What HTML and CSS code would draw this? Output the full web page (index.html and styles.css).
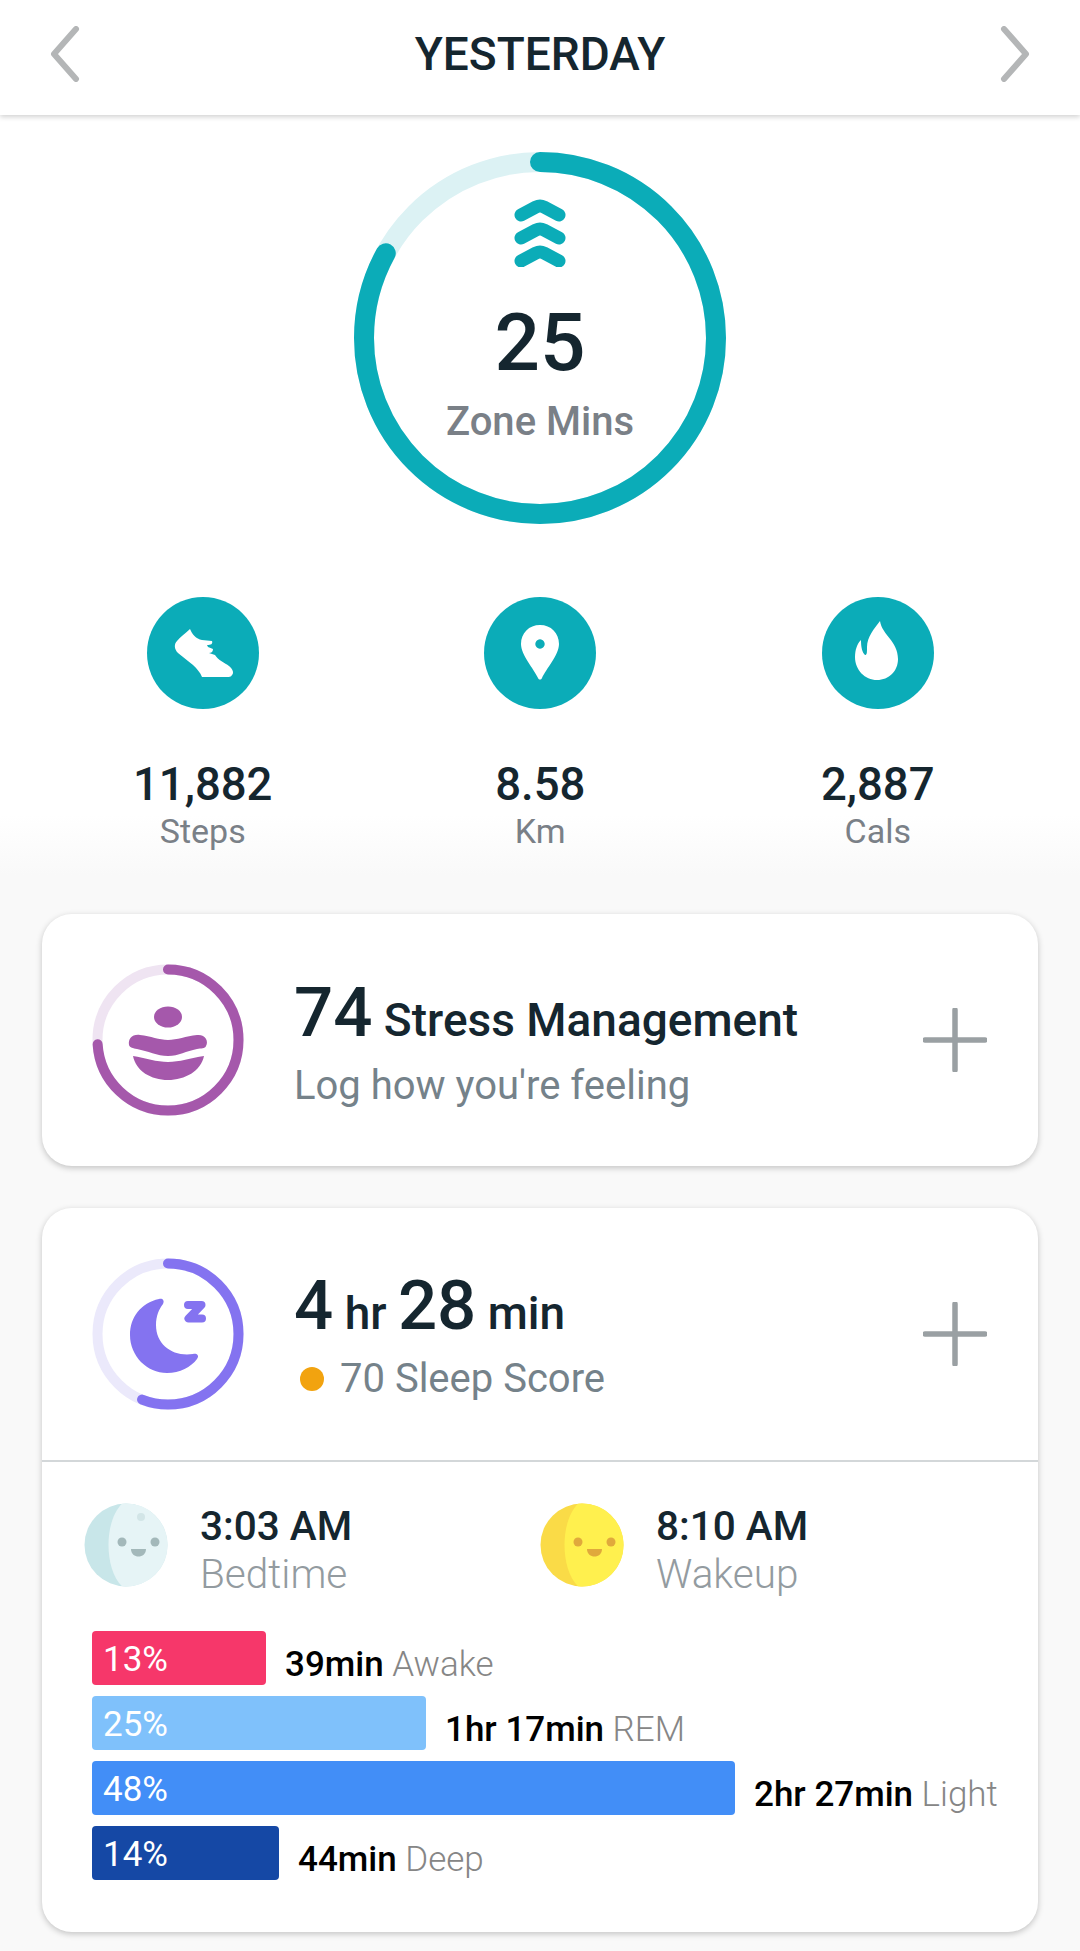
FILE: index.html
```html
<!DOCTYPE html>
<html lang="en">
<head>
    <meta charset="UTF-8">
    <title>Yesterday</title>
    <link rel="stylesheet" href="styles.css">
</head>
<body>
<header class="top_bar">
    <svg class="arrow" viewBox="0 0 30 56"><path d="M26 3 L4 28 L26 53"/></svg>
    <h1>YESTERDAY</h1>
    <svg class="arrow" viewBox="0 0 30 56"><path d="M4 3 L26 28 L4 53"/></svg>
</header>

<section class="zone">
    <svg class="zone_ring" viewBox="0 0 372 372">
        <circle class="zone_track" cx="186" cy="186" r="176"/>
        <circle class="zone_value" cx="186" cy="186" r="176" pathLength="100" stroke-dasharray="83 100" transform="rotate(-90 186 186)"/>
    </svg>
    <div class="zone_text">
        <svg class="chevrons" viewBox="0 0 52 69">
            <path d="M7 17 L22 9 Q26 7 30 9 L45 17"/>
            <path d="M7 40 L22 32 Q26 30 30 32 L45 40"/>
            <path d="M7 63 L22 55 Q26 53 30 55 L45 63"/>
        </svg>
        <div class="zone_num">25</div>
        <div class="zone_label">Zone Mins</div>
    </div>
</section>

<section class="stats">
    <div class="stat">
        <svg class="stat_icon" viewBox="0 0 112 112">
            <circle class="teal" cx="56" cy="56" r="56"/>
            <path class="white" d="M43 32 C45 37 49 42 55 43 L65 44 C66 47 64 48 60 48 L61 50 L66 52 C66 55 64 56 62 56 L68 58 C71 63 78 66 82 69 C86 72 87 76 85 78 C84 80 82 80 80 80 L55 80 C53 75 50 72 46 68 L31 56 C27 52 27 47 30 44 C33 40 39 36 43 32Z"/>
        </svg>
        <div class="stat_num">11,882</div>
        <div class="stat_label">Steps</div>
    </div>
    <div class="stat">
        <svg class="stat_icon" viewBox="0 0 112 112">
            <circle class="teal" cx="56" cy="56" r="56"/>
            <path class="white" fill-rule="evenodd" d="M56 28 C67 28 75 36 75 47 C75 58 62 72 58 81 C57 83 55 83 54 81 C50 72 37 58 37 47 C37 36 45 28 56 28Z M56 42.300 A4.700 4.700 0 1 0 56.010 42.300Z"/>
        </svg>
        <div class="stat_num">8.58</div>
        <div class="stat_label">Km</div>
    </div>
    <div class="stat">
        <svg class="stat_icon" viewBox="0 0 112 112">
            <circle class="teal" cx="56" cy="56" r="56"/>
            <path class="white" d="M58 24 C60 38 76 44 76 62 C76 74 67 83 55 83 C43 83 33 73 33 60 C33 53 35 47 39 43 C39 50 40 55 43 58 C45 58 45 56 45 50 C45 40 52 32 58 24Z"/>
        </svg>
        <div class="stat_num">2,887</div>
        <div class="stat_label">Cals</div>
    </div>
</section>

<section class="card">
    <div class="card_row">
        <svg class="card_ring" viewBox="-1 -1 152 152">
            <circle class="stress_track" cx="75" cy="75" r="70.500"/>
            <circle class="stress_value" cx="75" cy="75" r="70.500" pathLength="100" stroke-dasharray="74 100" transform="rotate(-90 75 75)"/>
            <ellipse class="stress_fill" cx="75" cy="52" rx="14" ry="10.500"/>
            <path class="stress_fill" d="M47 70 C58 71 66 75 75 75 C84 75 93 71 104 70 C112 69 116 76 113 81 C112 84 108 83 104 84 C93 86 86 91 75 91 C64 91 55 86 44 84 C40 83 37 83 36 80 C35 74 39 69 47 70Z"/>
            <path class="stress_fill" d="M40 91 C52 93 64 97 75 97 C86 97 98 93 111 91 C108 106 92 115 75 115 C58 115 43 106 40 91Z"/>
        </svg>
        <div class="card_text">
            <div class="headline"><span class="big">74</span> Stress Management</div>
            <div class="subline">Log how you're feeling</div>
        </div>
        <svg class="plus" viewBox="0 0 64 64"><path d="M32 2 V62 M2 32 H62"/></svg>
    </div>
</section>

<section class="card">
    <div class="card_row with_line">
        <svg class="card_ring" viewBox="-1 -1 152 152">
            <circle class="sleep_track" cx="75" cy="75" r="70.500"/>
            <circle class="sleep_value" cx="75" cy="75" r="70.500" pathLength="100" stroke-dasharray="56 100" transform="rotate(-90 75 75)"/>
            <path class="sleep_fill" d="M66 40 C48 44 37 58 37 76 C37 97 54 114 74 114 C87 114 98 108 104 100 C107 96 103 94 100 95 C80 98 63 86 63 66 C63 57 66 50 70 45 C72 41 69 39 66 40Z"/>
            <path class="sleep_z" d="M95 46 H108.500 L95.500 59.500 H109"/>
        </svg>
        <div class="card_text">
            <div class="headline"><span class="big">4</span> hr <span class="big">28</span> min</div>
            <div class="subline"><span class="score_dot"></span>70 Sleep Score</div>
        </div>
        <svg class="plus" viewBox="0 0 64 64"><path d="M32 2 V62 M2 32 H62"/></svg>
    </div>

    <div class="times">
        <div class="time">
            <svg class="moon" viewBox="0 0 84 84">
                <circle cx="42" cy="42" r="41.500" fill="#c8e6e9"/>
                <path d="M38 .7 A41.500 41.500 0 1 1 38 83.300 C20 66 20 18 38 .7Z" fill="#e6f4f6"/>
                <circle cx="57" cy="14" r="4" fill="#d2e5e7"/>
                <circle cx="38" cy="39" r="4.500" fill="#a3b8ba"/>
                <circle cx="71" cy="39" r="4.500" fill="#a3b8ba"/>
                <path d="M47 46 H62 C62 56 47 56 47 46Z" fill="#a3b8ba"/>
            </svg>
            <div class="time_text">
                <div class="time_val">3:03 AM</div>
                <div class="time_label">Bedtime</div>
            </div>
        </div>
        <div class="time">
            <svg class="moon" viewBox="0 0 84 84">
                <circle cx="42" cy="42" r="41.500" fill="#fadb47"/>
                <path d="M38 .7 A41.500 41.500 0 1 1 38 83.300 C20 66 20 18 38 .7Z" fill="#fff04e"/>
                <circle cx="38" cy="39" r="4.500" fill="#e0a93c"/>
                <circle cx="71" cy="39" r="4.500" fill="#e0a93c"/>
                <path d="M47 46 H62 C62 56 47 56 47 46Z" fill="#e0a93c"/>
            </svg>
            <div class="time_text">
                <div class="time_val">8:10 AM</div>
                <div class="time_label">Wakeup</div>
            </div>
        </div>
    </div>

    <div class="bars">
        <div class="bar_row">
            <div class="bar awake" style="width:174px">13%</div>
            <div class="bar_text"><b>39min</b> Awake</div>
        </div>
        <div class="bar_row">
            <div class="bar rem" style="width:334px">25%</div>
            <div class="bar_text"><b>1hr 17min</b> REM</div>
        </div>
        <div class="bar_row">
            <div class="bar light" style="width:643px">48%</div>
            <div class="bar_text"><b>2hr 27min</b> Light</div>
        </div>
        <div class="bar_row">
            <div class="bar deep" style="width:187px">14%</div>
            <div class="bar_text"><b>44min</b> Deep</div>
        </div>
    </div>
</section>
</body>
</html>
```

FILE: styles.css
```css
*{
    box-sizing: border-box;
}
html,body{
    margin:0;
    height:1951px;
}
body{
    overflow:hidden;
    font-family: Roboto,"Liberation Sans",sans-serif;
    color:#15262f;
    background:linear-gradient(#fff 815px,#f9f9f9 875px);
}

/* top bar */
.top_bar{
    height:115px;
    padding:0 50px 8px;
    display:flex;
    align-items:center;
    justify-content:space-between;
    background:#fff;
    box-shadow:0 2px 5px rgba(0,0,0,.18);
}
.top_bar h1{
    margin:0;
    font-size:46px;
    font-weight:500;
}
.arrow{
    width:30px;
    height:56px;
    fill:none;
    stroke:#b4b6b7;
    stroke-width:6;
    stroke-linecap:round;
    stroke-linejoin:round;
}

/* zone mins ring */
.zone{
    width:372px;
    height:372px;
    margin:37px auto 0;
    display:grid;
}
.zone_ring,.zone_text{
    grid-area:1/1;
}
.zone_ring{
    width:372px;
    height:372px;
    fill:none;
    stroke-width:20;
}
.zone_track{
    stroke:#dcf2f4;
}
.zone_value{
    stroke:#0bacb8;
    stroke-linecap:round;
}
.zone_text{
    display:flex;
    flex-direction:column;
    align-items:center;
    padding-top:46px;
}
.chevrons{
    width:52px;
    height:69px;
    fill:none;
    stroke:#0bacb8;
    stroke-width:13;
    stroke-linecap:round;
    stroke-linejoin:round;
}
.zone_num{
    margin-top:29px;
    font-size:80px;
    line-height:94px;
    font-weight:500;
}
.zone_label{
    margin-top:9px;
    font-size:40px;
    line-height:46px;
    font-weight:500;
    color:#7a8087;
}

/* steps, km, cals */
.stats{
    margin-top:73px;
    margin-bottom:63px;
    padding:0 0 0 34px;
    display:grid;
    grid-template-columns:repeat(3,337.500px);
}
.stat{
    display:flex;
    flex-direction:column;
    align-items:center;
}
.stat_icon{
    width:112px;
    height:112px;
}
.teal{
    fill:#0bacb8;
}
.white{
    fill:#fff;
}
.stat_num{
    margin-top:50px;
    font-size:45.500px;
    line-height:52px;
    font-weight:500;
}
.stat_label{
    font-size:34px;
    line-height:40px;
    color:#7a8087;
}

/* cards */
.card{
    margin:42px 42px 0;
    background:#fff;
    border-radius:30px;
    box-shadow:0 2px 6px rgba(0,0,0,.22);
}
.card_row{
    height:252px;
    padding:0 51px 0 50px;
    display:flex;
    align-items:center;
}
.with_line{
    height:254px;
    padding-bottom:1px;
    border-bottom:2px solid #d3d7d9;
}
.card_ring{
    width:152px;
    height:152px;
    flex:none;
    fill:none;
    stroke-width:10;
}
.card_text{
    flex:1;
    margin-left:50px;
    padding-top:7px;
}
.headline{
    font-size:46px;
    line-height:72px;
    font-weight:500;
}
.big{
    font-size:69px;
}
.subline{
    margin-top:5px;
    display:flex;
    align-items:center;
    font-size:40px;
    line-height:50px;
    color:#75828a;
}
.score_dot{
    width:24px;
    height:24px;
    margin:0 16px 0 6px;
    border-radius:50%;
    background:#f2a30f;
}
.plus{
    width:64px;
    height:64px;
    flex:none;
    fill:none;
    stroke:#9aa0a3;
    stroke-width:5.500;
    stroke-linecap:round;
}
.stress_track{
    stroke:#efe4f2;
}
.stress_value{
    stroke:#a558ab;
    stroke-linecap:round;
}
.stress_fill{
    fill:#a558ab;
    stroke:none;
}
.sleep_track{
    stroke:#ebe9fb;
}
.sleep_value{
    stroke:#8473f0;
    stroke-linecap:round;
}
.sleep_fill{
    fill:#8473f0;
    stroke:none;
}
.sleep_z{
    stroke:#8473f0;
    stroke-width:8;
    stroke-linecap:round;
    stroke-linejoin:round;
}

/* bedtime, wakeup */
.times{
    padding:39px 0 0 42px;
    display:flex;
}
.time{
    width:456px;
    display:flex;
    align-items:flex-start;
}
.moon{
    width:84px;
    height:84px;
    flex:none;
    margin:2px 32px 0 0;
}
.time_text{
    margin-top:2px;
}
.time_val{
    font-size:40.500px;
    line-height:46px;
    font-weight:500;
}
.time_label{
    font-size:40.500px;
    line-height:50px;
    font-weight:300;
    color:#939ba0;
}

/* sleep stages */
.bars{
    padding:32px 0 52px 50px;
    display:flex;
    flex-direction:column;
    gap:11px;
}
.bar_row{
    display:flex;
    align-items:center;
}
.bar{
    height:54px;
    padding-left:11px;
    border-radius:4px;
    font-size:35px;
    line-height:58px;
    color:#fff;
}
.awake{
    background:#f6376a;
}
.rem{
    background:#7fc1fb;
}
.light{
    background:#428ef7;
}
.deep{
    background:#1548a5;
}
.bar_text{
    margin:12px 0 0 19px;
    font-size:35px;
    font-weight:300;
    color:#868686;
}
.bar_text b{
    font-weight:500;
    color:#000;
}
```
